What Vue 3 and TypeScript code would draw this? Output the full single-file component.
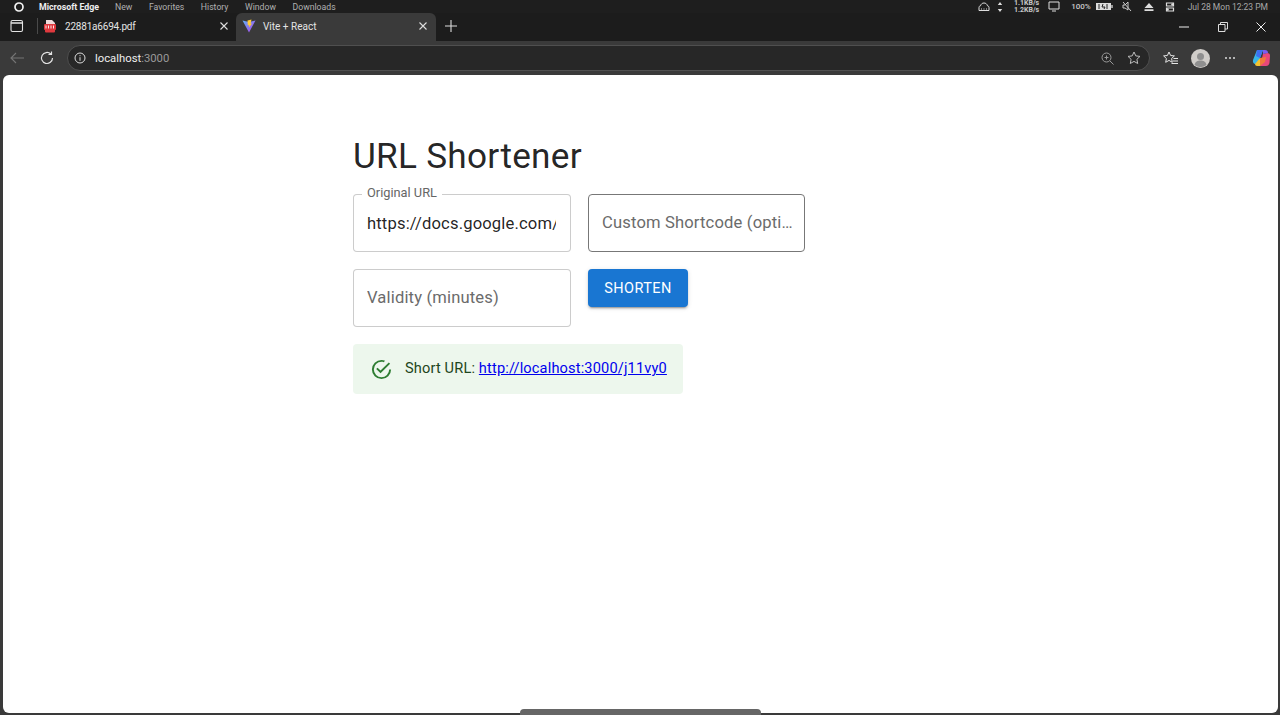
<script setup lang="ts">
const menuItems = ['New', 'Favorites', 'History', 'Window', 'Downloads']
const originalUrl = 'https://docs.google.com/document/d/1x2y3z/edit'
</script>

<template>
  <div class="window">
    <div class="menubar">
      <svg class="os-logo" width="12" height="12" viewBox="0 0 12 12">
        <circle cx="6" cy="6" r="4" fill="none" stroke="#f2f2f2" stroke-width="1.7" />
      </svg>
      <b class="app-name">Microsoft Edge</b>
      <span v-for="item in menuItems" :key="item" class="menu-item">{{ item }}</span>
      <div class="status">
        <svg class="st-cloud" width="12" height="10" viewBox="0 0 12 10">
          <path d="M1 8.500V5.500C1 4.500 1.500 4 2.500 3.800 3 2 4.300 1 6 1s3 1 3.500 2.800C10.500 4 11 4.500 11 5.500v3z" fill="none" stroke="#ddd" stroke-width="1" />
          <path d="M3 7h1M5.500 7h1M8 7h1" stroke="#ddd" stroke-width="1" />
        </svg>
        <svg class="st-arrows" width="6" height="10" viewBox="0 0 6 10">
          <path d="M3 0l2.200 3H.8zM3 10L.8 7h4.400z" fill="#ddd" />
        </svg>
        <div class="st-speed"><span>1.1KB/s</span><span>1.2KB/s</span></div>
        <svg class="st-monitor" width="12" height="11" viewBox="0 0 12 11">
          <path d="M1 1h10v7H1zM4 10h4" fill="none" stroke="#ddd" stroke-width="1" />
        </svg>
        <span class="st-pct">100%</span>
        <svg class="st-battery" width="17" height="9" viewBox="0 0 17 9">
          <rect x="0" y="1" width="15" height="7" fill="#ddd" />
          <rect x="15" y="3" width="2" height="3" fill="#999" />
          <path d="M3 2v5M7 2l-1 3h3l-1 2M11 2v5" stroke="#222" stroke-width="1" fill="none" />
        </svg>
        <svg class="st-mute" width="10" height="11" viewBox="0 0 10 11">
          <path d="M1 4h2l3-3v8L3 7H1zM1 1l8 9" fill="none" stroke="#ccc" stroke-width="1" />
        </svg>
        <svg class="st-eject" width="10" height="8" viewBox="0 0 10 8">
          <path d="M5 0l4.500 5h-9zM.5 6.300h9V8h-9z" fill="#ddd" />
        </svg>
        <svg class="st-ctrl" width="10" height="10" viewBox="0 0 10 10">
          <path d="M1.500 1h7v3h-7zM1.500 6h7v3h-7z" fill="none" stroke="#ddd" stroke-width="1.200" />
          <circle cx="7.500" cy="2.500" r="1.300" fill="#ddd" />
          <circle cx="2.500" cy="7.500" r="1.300" fill="#ddd" />
        </svg>
        <span class="st-clock">Jul 28 Mon 12:23 PM</span>
      </div>
    </div>

    <div class="tabbar">
      <svg class="ic-tabs" width="14" height="14" viewBox="0 0 14 14">
        <rect x="1" y="1.500" width="11.500" height="11" rx="1.500" fill="none" stroke="#e4e4e4" stroke-width="1.100" />
        <path d="M1 4h11.500" stroke="#e4e4e4" stroke-width="1.500" />
      </svg>
      <i class="tab-sep"></i>
      <div class="tab pdf">
        <svg class="tab-icon" width="14" height="14" viewBox="0 0 14 14">
          <path d="M3 1h6l3 3v2H3z" fill="#f0dcdc" />
          <rect x="1" y="5" width="12" height="6" rx="1" fill="#e0393e" />
          <path d="M2 11h10v1.500a1 1 0 0 1-1 1H3a1 1 0 0 1-1-1z" fill="#e0393e" />
          <path d="M3 6.500v3M5.500 6.500v3M8 6.500v3M10.500 6.500v3" stroke="#fff" stroke-width=".9" />
        </svg>
        <span class="tab-title">22881a6694.pdf</span>
        <svg class="tab-x" width="10" height="10" viewBox="0 0 10 10">
          <path d="M1.500 1.500l7 7M8.500 1.500l-7 7" stroke="#ddd" stroke-width="1.100" />
        </svg>
      </div>
      <div class="tab active">
        <svg class="tab-icon" width="14" height="14" viewBox="0 0 14 14">
          <defs>
            <linearGradient id="viteBody" x1="0" y1="0" x2="1" y2="1">
              <stop offset="0" stop-color="#5fb0f5" />
              <stop offset="1" stop-color="#b040e8" />
            </linearGradient>
          </defs>
          <path d="M.5 1.500L7 13.500l6.500-12L7 3z" fill="url(#viteBody)" />
          <path d="M9.500.5L5.500 1.500l.3 5 1.400-.5-.2 2.500L10 4.500l-1.400.3z" fill="#ffc933" />
        </svg>
        <span class="tab-title">Vite + React</span>
        <svg class="tab-x" width="10" height="10" viewBox="0 0 10 10">
          <path d="M1.500 1.500l7 7M8.500 1.500l-7 7" stroke="#ddd" stroke-width="1.100" />
        </svg>
      </div>
      <svg class="ic-plus" width="12" height="12" viewBox="0 0 12 12">
        <path d="M6 0v12M0 6h12" stroke="#ddd" stroke-width="1.100" />
      </svg>
      <div class="win-controls">
        <svg width="10" height="10" viewBox="0 0 10 10"><path d="M0 5h10" stroke="#eee" stroke-width="1" /></svg>
        <svg width="10" height="10" viewBox="0 0 10 10">
          <path d="M.5 2.500h6.500v7H.5zM2.500 2.500V.5h7v6.500H7" fill="none" stroke="#ddd" stroke-width="1" />
        </svg>
        <svg width="10" height="10" viewBox="0 0 10 10"><path d="M.5.5l9 9M9.500.5l-9 9" stroke="#eee" stroke-width="1" /></svg>
      </div>
    </div>

    <div class="toolbar">
      <svg class="ic-back" width="14" height="12" viewBox="0 0 14 12">
        <path d="M14 6H1M6 1L1 6l5 5" fill="none" stroke="#757575" stroke-width="1.100" />
      </svg>
      <svg class="ic-reload" width="14" height="14" viewBox="0 0 14 14">
        <path d="M12.500 7a5.500 5.500 0 1 1-1.700-4M11.500 .5v3h-3" fill="none" stroke="#e6e6e6" stroke-width="1.200" />
      </svg>
      <div class="addressbar">
        <svg class="ic-info" width="12" height="12" viewBox="0 0 12 12">
          <circle cx="6" cy="6" r="5" fill="none" stroke="#ddd" stroke-width="1" />
          <path d="M6 5.200v3.600M6 3.200v1" stroke="#ddd" stroke-width="1" />
        </svg>
        <span class="host">localhost<span class="port">:3000</span></span>
        <svg class="ic-zoom" width="13" height="13" viewBox="0 0 13 13">
          <circle cx="5.500" cy="5.500" r="4.500" fill="none" stroke="#9a9a9a" stroke-width="1" />
          <path d="M9 9l3.500 3.500M3.500 5.500h4M5.500 3.500v4" stroke="#9a9a9a" stroke-width="1" />
        </svg>
        <svg class="ic-star" width="14" height="14" viewBox="0 0 14 14">
          <path d="M7 1l1.800 3.900 4.200.5-3.100 2.900.8 4.200L7 10.400 3.300 12.500l.8-4.200L1 5.400l4.200-.5z" fill="none" stroke="#bdbdbd" stroke-width="1" />
        </svg>
      </div>
      <svg class="ic-favs" width="15" height="14" viewBox="0 0 15 14">
        <path d="M6 1l1.600 3.500 3.800.4-2.800 2.600.7 3.800L6 9.400l-3.300 1.900.7-3.800L.6 4.900l3.800-.4z" fill="none" stroke="#e6e6e6" stroke-width="1" />
        <path d="M10.500 7.500H15M10 10h5M8.500 12.500H15" stroke="#e6e6e6" stroke-width="1" />
      </svg>
      <svg class="avatar" width="19" height="19" viewBox="0 0 19 19">
        <circle cx="9.500" cy="9.500" r="9.500" fill="#d0cdc9" />
        <circle cx="9.500" cy="7.500" r="3.500" fill="#8f8f8f" />
        <path d="M3.500 16c.8-3.500 3-4.500 6-4.500s5.200 1 6 4.500a9.500 9.500 0 0 1-12 0z" fill="#8f8f8f" />
      </svg>
      <span class="ic-more"><i></i><i></i><i></i></span>
      <svg class="copilot" width="19" height="18" viewBox="0 0 19 18">
        <path d="M5 1h6l-3 8-2 6H3.500C1.500 15 .5 13 1 11z" fill="#37b6e8" />
        <path d="M5 1h6L8 9 4 7z" fill="#3f6ff0" />
        <path d="M8 17h6c2 0 3-1 3.500-3L18 7c.3-2-1-3-3-3l-4 1z" fill="#e8487a" />
        <path d="M11 1h2c2 0 3 1.200 3 3l-5 1z" fill="#7a5cf0" />
        <path d="M3 15l5-6 3 3-3 5H5c-1 0-2-1-2-2z" fill="#f2c230" />
        <path d="M8 9l6-1-1 5-5 4z" fill="#f07a3a" />
      </svg>
    </div>

    <div class="page">
      <h1>URL Shortener</h1>
      <div class="form">
        <div class="field filled">
          <label>Original URL</label>
          <input :value="originalUrl" readonly />
        </div>
        <div class="field hovered">
          <input class="ph-only" placeholder="Custom Shortcode (optional)" readonly />
        </div>
        <div class="field">
          <input class="ph-only" placeholder="Validity (minutes)" readonly />
        </div>
        <button class="shorten">SHORTEN</button>
      </div>
      <div class="alert">
        <svg class="alert-icon" width="23" height="23" viewBox="0 0 24 24">
          <path fill="#2e7d32" d="M20 12a8 8 0 0 1-8 8 8 8 0 0 1-8-8 8 8 0 0 1 8-8c.76 0 1.500.11 2.200.31l1.570-1.570A9.800 9.800 0 0 0 12 2 10 10 0 0 0 2 12a10 10 0 0 0 10 10 10 10 0 0 0 10-10M7.910 10.080L6.500 11.500 11 16 21 6l-1.410-1.420L11 13.170z" />
        </svg>
        <span class="alert-text">Short URL: <a href="#">http://localhost:3000/j11vy0</a></span>
      </div>
    </div>

    <div class="scroll-thumb"></div>
  </div>
</template>

<style>
html,
body {
  margin: 0;
  overflow: hidden;
}
</style>

<style scoped>
.window {
  width: 1280px;
  height: 715px;
  display: flex;
  flex-direction: column;
  position: relative;
  background: #3a3a3a;
  overflow: hidden;
  font-family: Roboto, "Liberation Sans", sans-serif;
}

.menubar {
  height: 13px;
  background: #1e1e1e;
  display: flex;
  align-items: center;
  color: #b0b0b0;
  font-size: 8.700px;
  white-space: nowrap;
}

.os-logo {
  margin-left: 13px;
  margin-right: 14px;
}

.app-name {
  color: #eee;
  font-size: 8.800px;
  margin-right: 16px;
}

.menu-item {
  margin-right: 16.500px;
}

.status {
  margin-left: auto;
  display: flex;
  align-items: center;
  color: #c8c8c8;
  font-size: 8px;
  font-weight: 500;
}

.st-cloud {
  margin-right: 7px;
}

.st-arrows {
  margin-right: 11px;
}

.st-speed {
  display: flex;
  flex-direction: column;
  line-height: 6.500px;
  font-size: 7px;
  font-weight: 700;
  margin-right: 9px;
}

.st-monitor {
  margin-right: 11px;
}

.st-pct {
  margin-right: 5px;
}

.st-battery {
  margin-right: 9px;
}

.st-mute {
  margin-right: 12px;
}

.st-eject {
  margin-right: 11px;
}

.st-ctrl {
  margin-right: 13px;
}

.st-clock {
  font-size: 8.500px;
  font-weight: 400;
  color: #a8a8a8;
  margin-right: 12px;
}

.tabbar {
  height: 28px;
  background: #1c1c1c;
  display: flex;
  align-items: center;
  color: #e4e4e4;
  position: relative;
}

.ic-tabs {
  margin-left: 10px;
  margin-bottom: 2px;
}

.tab-sep {
  width: 1px;
  height: 16px;
  background: #4a4a4a;
  margin-left: 13px;
  margin-bottom: 2px;
}

.tab {
  height: 28px;
  display: flex;
  align-items: center;
  padding: 0 7px 2px 5px;
  box-sizing: border-box;
  font-size: 10px;
}

.tab.pdf {
  width: 198px;
  letter-spacing: -0.2px;
}

.tab.active {
  width: 200px;
  background: #3a3a3a;
  border-radius: 6px 6px 0 0;
  padding-left: 6px;
  padding-right: 8px;
}

.tab-icon {
  margin-right: 8px;
  flex: none;
}

.tab.active .tab-icon {
  margin-right: 7px;
}

.tab-title {
  flex: 1;
}

.ic-plus {
  margin-left: 9px;
  margin-bottom: 2px;
}

.win-controls {
  margin-left: auto;
  margin-right: 14px;
  display: flex;
  gap: 28.500px;
  align-items: center;
}

.toolbar {
  height: 34px;
  background: #3a3a3a;
  display: flex;
  align-items: center;
}

.ic-back {
  margin-left: 10px;
}

.ic-reload {
  margin-left: 16px;
}

.addressbar {
  width: 1083px;
  height: 26px;
  margin-left: 13px;
  box-sizing: border-box;
  border: 1px solid #4f4f4f;
  border-radius: 13px;
  background: #272727;
  display: flex;
  align-items: center;
  padding-left: 6px;
  font-size: 11.300px;
  color: #eee;
}

.ic-info {
  margin-right: 9px;
}

.port {
  color: #9a9a9a;
}

.ic-zoom {
  margin-left: auto;
  margin-right: 13px;
}

.ic-star {
  margin-right: 8px;
}

.ic-favs {
  margin-left: 13px;
}

.avatar {
  margin-left: 13px;
}

.ic-more {
  margin-left: 15px;
  display: flex;
  gap: 2px;
}

.ic-more i {
  width: 2px;
  height: 2px;
  border-radius: 50%;
  background: #ddd;
}

.copilot {
  margin-left: 17px;
}

.page {
  flex: 1;
  margin: 0 2px 2px 3px;
  background: #fff;
  border-radius: 6px;
  padding: 60px 0 0 350px;
  color: rgba(0, 0, 0, 0.87);
}

h1 {
  margin: 0 0 17px;
  font-size: 35.200px;
  font-weight: 400;
  line-height: 42px;
  letter-spacing: 0.26px;
}

.form {
  display: grid;
  grid-template-columns: 218px 217px;
  column-gap: 17px;
  row-gap: 17px;
  align-items: start;
}

.field {
  position: relative;
  height: 58px;
}

.field input {
  width: 100%;
  height: 100%;
  box-sizing: border-box;
  border: 1px solid rgba(0, 0, 0, 0.2);
  border-radius: 4px;
  padding: 1px 14px 0 13px;
  font: 400 16.600px Roboto, sans-serif;
  letter-spacing: 0.15px;
  color: rgba(0, 0, 0, 0.87);
  outline: none;
  background: #fff;
}

.field input.ph-only {
  text-overflow: ellipsis;
  padding-top: 0;
  padding-right: 10px;
  padding-bottom: 2px;
}

.field input::placeholder {
  color: #6b6b6b;
  opacity: 1;
}

.field.hovered input {
  border-color: #777;
}

.field label {
  position: absolute;
  left: 9px;
  top: -9px;
  padding: 0 5px;
  background: #fff;
  font-size: 12.800px;
  line-height: 16px;
  color: #666;
}

.shorten {
  width: 100px;
  height: 38px;
  border: 0;
  border-radius: 4px;
  background: #1976d2;
  color: #fff;
  font: 400 14.500px Roboto, sans-serif;
  letter-spacing: 0.45px;
  box-shadow: 0 3px 1px -2px rgba(0, 0, 0, 0.2), 0 2px 2px 0 rgba(0, 0, 0, 0.14), 0 1px 5px 0 rgba(0, 0, 0, 0.12);
}

.alert {
  width: 330px;
  height: 50px;
  box-sizing: border-box;
  margin-top: 17px;
  padding: 0 16px 0 17px;
  display: flex;
  align-items: center;
  border-radius: 4px;
  background: #edf7ed;
  color: #1e4620;
  font-size: 14.600px;
  letter-spacing: 0.15px;
  white-space: nowrap;
}

.alert-icon {
  margin-right: 12px;
  flex: none;
}

.alert-text {
  margin-top: -2px;
}

.alert-text a {
  color: #0000ee;
}

.scroll-thumb {
  position: absolute;
  left: 520px;
  bottom: 0;
  width: 241px;
  height: 6px;
  background: #666;
  border-radius: 4px 4px 0 0;
}
</style>
